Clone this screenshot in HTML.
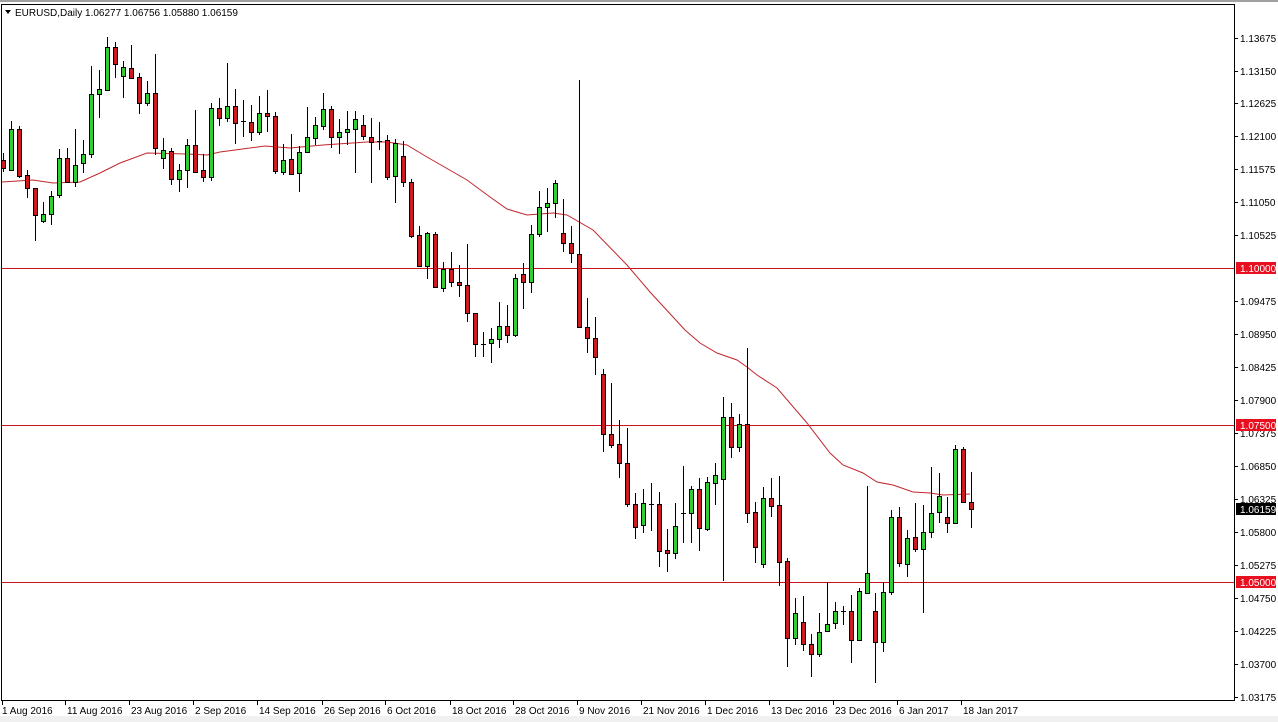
<!DOCTYPE html>
<html><head><meta charset="utf-8">
<style>
html,body{margin:0;padding:0;background:#fff;width:1278px;height:722px;overflow:hidden}
svg{display:block}
text{font-family:"Liberation Sans",sans-serif;font-size:10px;fill:#000}
</style></head>
<body>
<svg id="s" width="1278" height="722" xmlns="http://www.w3.org/2000/svg">
<rect x="0" y="0" width="1278" height="722" fill="#fff"/>
<rect x="0" y="0" width="1278" height="2" fill="#a0a0a0"/>
<rect x="0" y="716" width="1278" height="6" fill="#f0f0f0"/>
<rect x="1.5" y="4.5" width="1233" height="696" fill="#fff" stroke="#000" stroke-width="1"/>
<g id="lines"></g>
<g id="ma"></g>
<g id="c"></g>
<g id="ax"></g>
<path d="M5 10 L11 10 L8 14 Z" fill="#000"/>
<text x="15" y="16" font-size="10">EURUSD,Daily  1.06277 1.06756 1.05880 1.06159</text>
</svg>
<script>
var NS="http://www.w3.org/2000/svg";
function el(p,t,a,txt){var e=document.createElementNS(NS,t);for(var k in a)e.setAttribute(k,a[k]);if(txt!==undefined)e.textContent=txt;document.getElementById(p).appendChild(e);return e;}
// horizontal lines
[268,425,582].forEach(function(y){el("lines","line",{x1:2,x2:1234,y1:y+0.5,y2:y+0.5,stroke:"#c8141e","stroke-width":1});});
// MA
var ma=[[2,182],[33,180],[53,183],[80,182],[100,173],[120,163],[147,153],[187,154],[207,155],[220,152],[250,148],[265,146],[290,148],[323,145],[367,142],[387,142],[407,145],[427,157],[467,180],[490,197],[507,209],[527,215],[553,213],[567,215],[593,230],[627,265],[650,292],[685,330],[700,343],[717,353],[737,360],[747,367],[757,375],[777,388],[807,423],[830,453],[843,465],[863,473],[877,482],[893,485],[913,492],[930,493],[943,495],[970,494]];
el("ma","polyline",{points:ma.map(function(p){return p.join(",")}).join(" "),fill:"none",stroke:"#c0272d","stroke-width":1});
// candles [o,c,h,l]
var d=[[160,168,153,172],[170,129,121,170],[129,176,126,178],[175,188,170,198],[188,215,188,241],[221,214,202,223],[214,196,191,225],[195,158,149,198],[158,182,148,183],[182,165,129,187],
[163,154,140,173],[154,94,66,158],[94,89,70,118],[90,47,37,91],[47,64,42,78],[76,67,61,98],[68,78,45,78],[77,103,73,114],[103,93,81,106],[93,148,54,155],
[158,150,138,169],[151,179,148,185],[179,170,164,192],[170,145,139,188],[145,172,110,173],[170,177,154,182],[177,108,103,181],[108,118,98,126],[118,106,63,122],[106,123,89,144],
[121,121,100,137],[122,132,105,141],[132,113,96,135],[113,116,90,132],[116,171,112,174],[172,160,144,175],[159,174,134,174],[173,152,146,192],[152,137,107,153],[138,125,117,145],
[126,109,93,130],[109,137,106,148],[137,132,119,154],[132,129,111,145],[129,119,111,173],[125,136,115,140],[137,142,118,183],[141,141,122,150],[140,177,135,180],[176,143,139,203],
[156,182,141,187],[182,236,179,238],[235,266,226,267],[266,233,232,279],[234,287,232,287],[288,269,262,292],[269,282,252,287],[282,285,265,297],[285,313,244,322],[313,344,313,357],
[344,344,332,357],[343,339,328,363],[339,326,302,348],[326,335,305,343],[335,278,274,337],[274,282,263,309],[282,234,225,293],[234,207,191,237],[207,203,188,232],[203,183,180,218],
[233,243,199,252],[243,253,226,263],[254,327,80,328],[327,338,298,353],[338,357,317,375],[374,434,369,452],[434,445,383,448],[444,463,420,478],[463,504,428,507],[504,527,493,539],
[525,503,489,533],[504,504,483,531],[504,551,492,567],[550,553,529,572],[553,526,503,559],[513,513,466,543],[513,489,486,543],[489,528,478,551],[529,482,477,531],[483,475,463,505],
[479,417,397,581],[417,447,403,458],[447,424,414,452],[424,513,348,523],[512,547,502,563],[564,498,487,568],[498,506,478,517],[505,562,476,586],[561,638,558,667],[638,613,598,645],
[622,644,596,651],[644,654,634,677],[654,632,613,657],[631,624,582,631],[623,611,602,629],[611,611,606,625],[611,640,595,663],[640,591,588,641],[593,573,486,593],[611,642,593,683],
[642,592,582,652],[592,517,510,595],[517,563,507,567],[564,538,530,577],[537,549,503,552],[549,532,505,613],[532,513,467,538],[512,496,473,523],[517,523,497,533],[523,449,445,523],
[449,502,447,502],[502,509,472,528]];
d.forEach(function(c,i){
 var x=3+8*i;var o=c[0],cl=c[1],h=c[2],l=c[3];
 el("c","line",{x1:x+0.5,x2:x+0.5,y1:h,y2:l,stroke:"#000","stroke-width":1});
 var top=Math.min(o,cl),bot=Math.max(o,cl);
 if(bot-top<1){el("c","line",{x1:x-2,x2:x+3,y1:top+0.5,y2:top+0.5,stroke:"#000","stroke-width":1});return;}
 var col=cl<o?"#32cd32":"#cc1a1e";
 el("c","rect",{x:x-1.5,y:top+0.5,width:4,height:bot-top,fill:col,stroke:"#000","stroke-width":1});
});
// price axis
var pl=[["1.13675",38],["1.13150",71],["1.12625",103],["1.12100",136],["1.11575",169],["1.11050",202],["1.10525",235],["1.09475",301],["1.08950",334],["1.08425",367],["1.07900",400],["1.07375",433],["1.06850",466],["1.06325",499],["1.05800",532],["1.05275",565],["1.04750",598],["1.04225",631],["1.03700",664],["1.03175",697]];
pl.forEach(function(p){el("ax","line",{x1:1235,x2:1238,y1:p[1]+0.5,y2:p[1]+0.5,stroke:"#000"});el("ax","text",{x:1240,y:p[1]+4},p[0]);});
[["1.10000",268,"#e8101e"],["1.07500",425,"#e8101e"],["1.06159",509,"#000"],["1.05000",582,"#e8101e"]].forEach(function(b){
 el("ax","rect",{x:1236,y:b[1]-6,width:40,height:12,fill:b[2]});
 el("ax","text",{x:1240,y:b[1]+4,style:"fill:#fff"},b[0]);
});
// date axis
var dl=[["1 Aug 2016",2],["11 Aug 2016",65],["23 Aug 2016",129],["2 Sep 2016",193],["14 Sep 2016",257],["26 Sep 2016",322],["6 Oct 2016",385],["18 Oct 2016",450],["28 Oct 2016",513],["9 Nov 2016",577],["21 Nov 2016",641],["1 Dec 2016",705],["13 Dec 2016",769],["23 Dec 2016",833],["6 Jan 2017",897],["18 Jan 2017",961]];
dl.forEach(function(p){el("ax","line",{x1:p[0]==="1 Aug 2016"?2.5:p[1]+0.5,x2:p[0]==="1 Aug 2016"?2.5:p[1]+0.5,y1:701,y2:705,stroke:"#000"});el("ax","text",{x:p[1]+(p[1]<5?0:2),y:714},p[0]);});
</script>
</body></html>
